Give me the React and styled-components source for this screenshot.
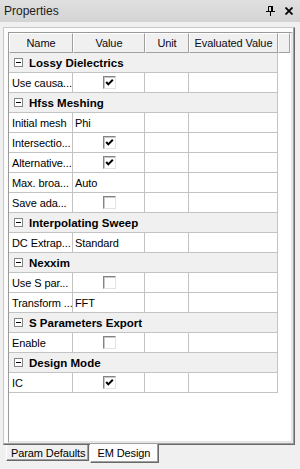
import styled, { createGlobalStyle } from "styled-components";

const GlobalStyle = createGlobalStyle`
  html, body {
    margin: 0;
    padding: 0;
    background: #f0f0f0;
  }
  body {
    font-family: "Liberation Sans", Arial, sans-serif;
    font-size: 11px;
    letter-spacing: -0.1px;
    color: #000;
  }
`;

const Window = styled.div`
  width: 300px;
  height: 469px;
  display: flex;
  flex-direction: column;
  background: #f0f0f0;
  overflow: hidden;
`;

const TitleBar = styled.div`
  height: 22px;
  flex: none;
  display: flex;
  align-items: center;
  padding: 0 7px 0 4px;
  box-sizing: border-box;
  background: linear-gradient(#e0e0e0, #d3d3d3);
`;

const Title = styled.span`
  flex: 1;
  font-size: 12px;
  letter-spacing: 0;
  color: #1b1b1b;
`;

const TitleButtons = styled.div`
  display: flex;
  align-items: center;
  gap: 10px;
`;

const TabPage = styled.div`
  margin: 5px 5px 0 3px;
  height: 418px;
  flex: none;
  box-sizing: border-box;
  display: flex;
  padding: 4px 1px 1px 4px;
  background: #fcfcfc;
  border-top: 1px solid #c8c8c8;
  border-left: 1px solid #c8c8c8;
  border-right: 1px solid #696969;
  border-bottom: 1px solid #696969;
  box-shadow: inset -1px -1px 0 #a0a0a0;
`;

const Grid = styled.div`
  flex: 1;
  background: #fff;
  border-top: 1px solid #9a9a9a;
  border-left: 1px solid #9a9a9a;
  border-right: 2px solid #e6e6e6;
  border-bottom: 2px solid #e6e6e6;
`;

const HeaderRow = styled.div`
  display: grid;
  grid-template-columns: 64px 72px 44px 89px 12px;
  height: 20px;
`;

const HeaderCell = styled.div`
  box-sizing: border-box;
  display: flex;
  align-items: center;
  justify-content: center;
  background: #f0f0f0;
  border-top: 1px solid #fff;
  border-left: 1px solid #fff;
  border-right: 1px solid #a0a0a0;
  border-bottom: 1px solid #a0a0a0;
  white-space: nowrap;
  overflow: hidden;
  color: #0a0a14;
`;

const Row = styled.div`
  display: grid;
  grid-template-columns: 64px 72px 44px 89px;
  width: 269px;
  height: 20px;
`;

const Cell = styled.div`
  box-sizing: border-box;
  display: flex;
  align-items: center;
  justify-content: ${(p) => (p.$center ? "center" : "flex-start")};
  padding-left: ${(p) => (p.$center ? 0 : p.$pad || 3)}px;
  border-right: 1px solid #c3c3c3;
  border-bottom: 1px solid #c3c3c3;
  white-space: nowrap;
  overflow: hidden;
`;

const CategoryRow = styled.div`
  box-sizing: border-box;
  width: 269px;
  height: 20px;
  display: flex;
  align-items: center;
  gap: 6px;
  padding-left: 5px;
  background: #f0f0f0;
  border-right: 1px solid #c3c3c3;
  border-bottom: 1px solid #c3c3c3;
  font-weight: bold;
  font-size: 11.5px;
  letter-spacing: 0;
`;

const Toggle = styled.span`
  box-sizing: border-box;
  width: 9px;
  height: 9px;
  border: 1px solid #848484;
  background: #fff;
  display: flex;
  align-items: center;
  justify-content: center;
  &::after {
    content: "";
    width: 5px;
    height: 1px;
    background: #000;
  }
`;

const Box = styled.span`
  box-sizing: border-box;
  width: 13px;
  height: 13px;
  margin-left: 1px;
  background: #fff;
  border-top: 1px solid #848484;
  border-left: 1px solid #848484;
  border-right: 1px solid #e3e3e3;
  border-bottom: 1px solid #e3e3e3;
  box-shadow: inset 1px 1px 0 #c8c8c8;
  display: flex;
  align-items: center;
  justify-content: center;
`;

const TabStrip = styled.div`
  display: flex;
  align-items: flex-start;
  padding-left: 6px;
  margin-top: -1px;
`;

const Tab = styled.div`
  box-sizing: border-box;
  position: relative;
  display: flex;
  align-items: center;
  white-space: nowrap;
  height: ${(p) => (p.$active ? 19 : 16)}px;
  padding: ${(p) => (p.$active ? "0 8px 0 6px" : "0 3px 0 4px")};
  margin-top: ${(p) => (p.$active ? 0 : 1)}px;
  margin-left: ${(p) => (p.$active ? 1 : 0)}px;
  background: ${(p) => (p.$active ? "#fcfcfc" : "#f0f0f0")};
  border-left: 1px solid #fff;
  border-right: 1px solid #696969;
  border-bottom: 1px solid #696969;
  box-shadow: inset -1px -1px 0 #a0a0a0;
  z-index: ${(p) => (p.$active ? 1 : 0)};
`;

const Check = () => (
  <Box>
    <svg width="9" height="9" viewBox="0 0 9 9">
      <polyline points="1.2,4 3.3,6.4 7.8,1.8" fill="none" stroke="#000" strokeWidth="2" />
    </svg>
  </Box>
);

const PinIcon = () => (
  <svg width="9" height="10" viewBox="0 0 9 10">
    <path d="M2.5 0.5 H6.5 V5 M2.5 0.5 V5" fill="none" stroke="#000" strokeWidth="1" />
    <rect x="5" y="0" width="2" height="5" fill="#000" />
    <rect x="0" y="5" width="9" height="1" fill="#000" />
    <rect x="4" y="6" width="1" height="4" fill="#000" />
  </svg>
);

const CloseIcon = () => (
  <svg width="8" height="8" viewBox="0 0 8 8">
    <path d="M0.5 0.5 L7.5 7.5 M7.5 0.5 L0.5 7.5" stroke="#000" strokeWidth="1.8" />
  </svg>
);

const rows = [
  { cat: "Lossy Dielectrics" },
  { name: "Use causa...", check: true },
  { cat: "Hfss Meshing" },
  { name: "Initial mesh", value: "Phi" },
  { name: "Intersectio...", check: true },
  { name: "Alternative...", check: true },
  { name: "Max. broa...", value: "Auto" },
  { name: "Save ada...", check: false },
  { cat: "Interpolating Sweep" },
  { name: "DC Extrap...", value: "Standard" },
  { cat: "Nexxim" },
  { name: "Use S par...", check: false },
  { name: "Transform ...", value: "FFT" },
  { cat: "S Parameters Export" },
  { name: "Enable", check: false },
  { cat: "Design Mode" },
  { name: "IC", check: true },
];

export default function App() {
  return (
    <Window>
      <GlobalStyle />
      <TitleBar>
        <Title>Properties</Title>
        <TitleButtons>
          <PinIcon />
          <CloseIcon />
        </TitleButtons>
      </TitleBar>
      <TabPage>
        <Grid>
          <HeaderRow>
            <HeaderCell>Name</HeaderCell>
            <HeaderCell>Value</HeaderCell>
            <HeaderCell>Unit</HeaderCell>
            <HeaderCell>Evaluated Value</HeaderCell>
            <HeaderCell />
          </HeaderRow>
          {rows.map((r, i) =>
            r.cat ? (
              <CategoryRow key={i}>
                <Toggle />
                {r.cat}
              </CategoryRow>
            ) : (
              <Row key={i}>
                <Cell>{r.name}</Cell>
                {r.check !== undefined ? (
                  <Cell $center>{r.check ? <Check /> : <Box />}</Cell>
                ) : (
                  <Cell $pad={2}>{r.value}</Cell>
                )}
                <Cell />
                <Cell />
              </Row>
            )
          )}
        </Grid>
      </TabPage>
      <TabStrip>
        <Tab>Param Defaults</Tab>
        <Tab $active>EM Design</Tab>
      </TabStrip>
    </Window>
  );
}
